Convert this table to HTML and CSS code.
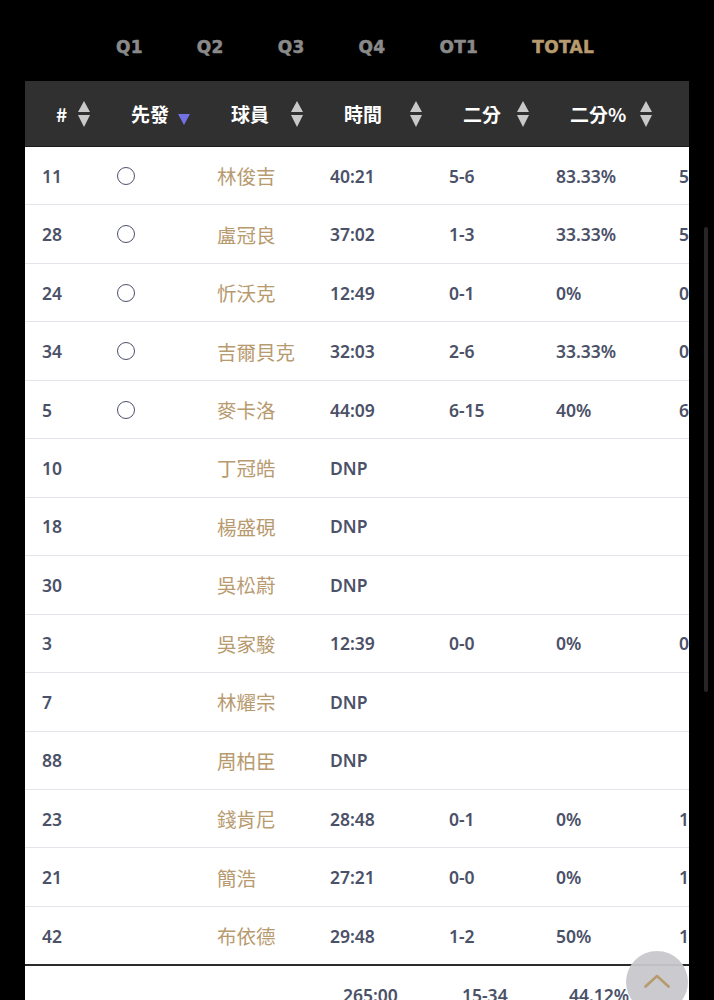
FILE: index.html
```html
<!DOCTYPE html>
<html lang="zh-Hant">
<head>
<meta charset="utf-8">
<title>Box Score</title>
<link rel="stylesheet" href="styles.css">
</head>
<body>
<nav class="tabs">
  <span class="tab">Q1</span>
  <span class="tab">Q2</span>
  <span class="tab">Q3</span>
  <span class="tab">Q4</span>
  <span class="tab">OT1</span>
  <span class="tab active">TOTAL</span>
</nav>

<div class="table-wrap">
  <table class="stats">
    <colgroup>
      <col class="c-num"><col class="c-start"><col class="c-name"><col class="c-time"><col class="c-two"><col class="c-pct"><col class="c-three"><col class="c-extra">
    </colgroup>
    <thead>
      <tr>
        <th><div class="th-in"><span>#</span><svg class="sort" viewBox="0 0 12 26"><path d="M6 0 L12 11 L0 11 Z"/><path d="M0 14 L12 14 L6 26 Z"/></svg></div></th>
        <th><div class="th-in"><span>先發</span><svg class="sort-desc" viewBox="0 0 12 11"><path d="M0 0 L12 0 L6 11 Z"/></svg></div></th>
        <th><div class="th-in"><span>球員</span><svg class="sort" viewBox="0 0 12 26"><path d="M6 0 L12 11 L0 11 Z"/><path d="M0 14 L12 14 L6 26 Z"/></svg></div></th>
        <th><div class="th-in"><span>時間</span><svg class="sort" viewBox="0 0 12 26"><path d="M6 0 L12 11 L0 11 Z"/><path d="M0 14 L12 14 L6 26 Z"/></svg></div></th>
        <th><div class="th-in"><span>二分</span><svg class="sort" viewBox="0 0 12 26"><path d="M6 0 L12 11 L0 11 Z"/><path d="M0 14 L12 14 L6 26 Z"/></svg></div></th>
        <th><div class="th-in"><span>二分%</span><svg class="sort" viewBox="0 0 12 26"><path d="M6 0 L12 11 L0 11 Z"/><path d="M0 14 L12 14 L6 26 Z"/></svg></div></th>
        <th><div class="th-in"><span>三分</span><svg class="sort" viewBox="0 0 12 26"><path d="M6 0 L12 11 L0 11 Z"/><path d="M0 14 L12 14 L6 26 Z"/></svg></div></th>
        <th><div class="th-in"><span>三分%</span></div></th>
      </tr>
    </thead>
    <tbody>
      <tr><td>11</td><td><span class="starter"></span></td><td class="name">林俊吉</td><td>40:21</td><td>5-6</td><td>83.33%</td><td>5-9</td><td>55.56%</td></tr>
      <tr><td>28</td><td><span class="starter"></span></td><td class="name">盧冠良</td><td>37:02</td><td>1-3</td><td>33.33%</td><td>5-11</td><td>45.45%</td></tr>
      <tr><td>24</td><td><span class="starter"></span></td><td class="name">忻沃克</td><td>12:49</td><td>0-1</td><td>0%</td><td>0-0</td><td>0%</td></tr>
      <tr><td>34</td><td><span class="starter"></span></td><td class="name">吉爾貝克</td><td>32:03</td><td>2-6</td><td>33.33%</td><td>0-2</td><td>0%</td></tr>
      <tr><td>5</td><td><span class="starter"></span></td><td class="name">麥卡洛</td><td>44:09</td><td>6-15</td><td>40%</td><td>6-11</td><td>54.55%</td></tr>
      <tr><td>10</td><td></td><td class="name">丁冠皓</td><td>DNP</td><td></td><td></td><td></td><td></td></tr>
      <tr><td>18</td><td></td><td class="name">楊盛硯</td><td>DNP</td><td></td><td></td><td></td><td></td></tr>
      <tr><td>30</td><td></td><td class="name">吳松蔚</td><td>DNP</td><td></td><td></td><td></td><td></td></tr>
      <tr><td>3</td><td></td><td class="name">吳家駿</td><td>12:39</td><td>0-0</td><td>0%</td><td>0-1</td><td>0%</td></tr>
      <tr><td>7</td><td></td><td class="name">林耀宗</td><td>DNP</td><td></td><td></td><td></td><td></td></tr>
      <tr><td>88</td><td></td><td class="name">周柏臣</td><td>DNP</td><td></td><td></td><td></td><td></td></tr>
      <tr><td>23</td><td></td><td class="name">錢肯尼</td><td>28:48</td><td>0-1</td><td>0%</td><td>1-4</td><td>25%</td></tr>
      <tr><td>21</td><td></td><td class="name">簡浩</td><td>27:21</td><td>0-0</td><td>0%</td><td>1-3</td><td>33.33%</td></tr>
      <tr><td>42</td><td></td><td class="name">布依德</td><td>29:48</td><td>1-2</td><td>50%</td><td>1-2</td><td>50%</td></tr>
    </tbody>
    <tfoot>
      <tr><td></td><td></td><td></td><td>265:00</td><td>15-34</td><td>44.12%</td><td>19-43</td><td>44.19%</td></tr>
    </tfoot>
  </table>
</div>

<div class="scrollbar"></div>

<button class="to-top" aria-label="回到頂端">
  <svg viewBox="0 0 26 14"><path d="M1.5 12.5 L13 2 L24.5 12.5"/></svg>
</button>
</body>
</html>
```

FILE: styles.css
```css
html, body {
  margin: 0;
  padding: 0;
  background: #000;
}

body {
  font-family: "Noto Sans", "Noto Sans CJK TC", sans-serif;
  height: 1000px;
  overflow: hidden;
}

.tabs {
  box-sizing: border-box;
  height: 81px;
  padding-top: 12px;
  padding-right: 4px;
  display: flex;
  justify-content: center;
  align-items: center;
  gap: 54px;
}

.tab {
  font-family: "DejaVu Sans", sans-serif;
  font-weight: 700;
  font-size: 17px;
  letter-spacing: 0.3px;
  color: #8a8a8a;
  -webkit-text-stroke: 0.5px currentColor;
}

.tab.active {
  color: #b69b6f;
}

.table-wrap {
  margin-left: 25px;
  width: 664px;
  overflow: hidden;
  background: #fff;
}

.stats {
  table-layout: fixed;
  width: 852px;
  border-collapse: separate;
  border-spacing: 0;
}

.c-num { width: 75px; }
.c-start { width: 100px; }
.c-name { width: 113px; }
.c-time { width: 119px; }
.c-two { width: 107px; }
.c-pct { width: 123px; }
.c-three { width: 110px; }
.c-extra { width: 105px; }

.stats thead th {
  background: #303030;
  height: 65px;
  padding: 0;
  border-bottom: 1px solid #1c1c1c;
  color: #fff;
  font-family: "Noto Sans CJK TC", "Noto Sans", sans-serif;
  font-weight: 700;
  font-size: 19px;
  text-align: left;
}

.th-in {
  display: flex;
  align-items: center;
  justify-content: space-between;
  padding: 0 10px 0 31px;
}

.sort {
  width: 12px;
  height: 26px;
  fill: #c9c9c9;
}

.sort-desc {
  width: 12px;
  height: 11px;
  margin-top: 12px;
  fill: #7272e4;
}

.stats tbody td {
  height: 57.46px;
  padding: 0 0 0 17px;
  border-bottom: 1px solid #e3e5ea;
  color: #4b5168;
  font-size: 17.5px;
  font-weight: 600;
  white-space: nowrap;
  overflow: hidden;
  vertical-align: middle;
}

.stats tbody td.name {
  font-family: "Noto Sans CJK TC", sans-serif;
  font-weight: 400;
  font-size: 19.5px;
  color: #b89a6f;
}

.stats tbody tr:last-child td {
  border-bottom: none;
}

.starter {
  display: block;
  box-sizing: border-box;
  width: 18px;
  height: 18px;
  border: 1.5px solid #4b5168;
  border-radius: 50%;
}

.stats tfoot td {
  height: 58px;
  padding: 0 0 0 30px;
  border-top: 2px solid #2b2b2b;
  color: #4b5168;
  font-size: 17.5px;
  font-weight: 600;
  white-space: nowrap;
  overflow: hidden;
  vertical-align: middle;
}

.scrollbar {
  position: fixed;
  left: 704px;
  top: 227px;
  width: 4px;
  height: 465px;
  border-radius: 2px;
  background: #262626;
}

.to-top {
  position: fixed;
  left: 626px;
  top: 951px;
  width: 62px;
  height: 62px;
  border: none;
  border-radius: 50%;
  background: rgba(200, 200, 204, 0.95);
  padding: 0;
  display: flex;
  align-items: flex-start;
  justify-content: center;
}

.to-top svg {
  width: 26px;
  height: 14px;
  margin-top: 23px;
  fill: none;
  stroke: #b69b6f;
  stroke-width: 2.6;
  stroke-linecap: round;
  stroke-linejoin: round;
}
```
